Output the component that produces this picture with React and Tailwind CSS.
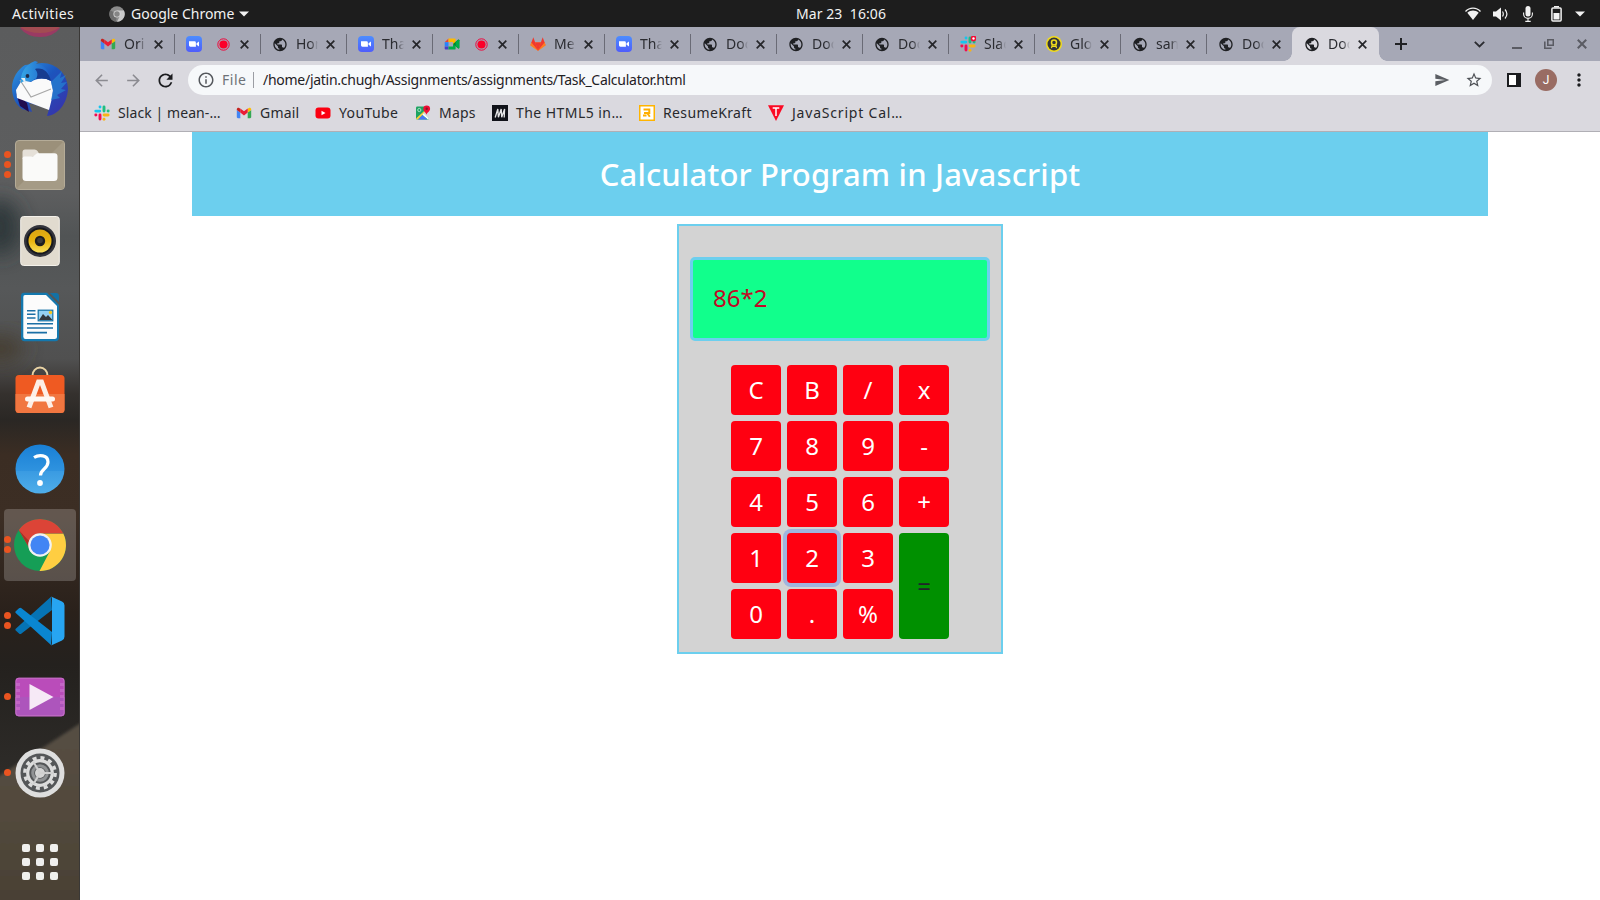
import React from "react";
import {
  MdArrowBack,
  MdArrowForward,
  MdRefresh,
  MdStarBorder,
  MdSend,
  MdInfoOutline,
  MdMoreVert,
  MdPublic,
} from "react-icons/md";

/* ---------- favicons ---------- */

function Gmail() {
  return (
    <svg width="16" height="16" viewBox="0 0 16 16">
      <path d="M.8 5v7.1c0 .7.5 1.1 1.1 1.1h2.4V7.4z" fill="#4285f4" />
      <path d="M15.2 5v7.1c0 .7-.5 1.1-1.1 1.1h-2.4V7.4z" fill="#34a853" />
      <path d="M11.7 3.7v3.9l3.5-2.6V4.3c0-1.6-1.5-2-2.4-1.4z" fill="#fbbc04" />
      <path d="M4.3 7.6V3.5L8 6.3l3.7-2.8v4.1L8 10.4z" fill="#ea1c36" />
      <path d="M.8 4.3V5l3.5 2.6V3.7l-1.1-.8C2.300 2.300.8 2.700.8 4.300z" fill="#c5221f" />
    </svg>
  );
}

function Zoom() {
  return (
    <svg width="16" height="16" viewBox="0 0 16 16">
      <defs>
        <linearGradient id="zm" x1="0" y1="0" x2="0" y2="1">
          <stop offset="0" stopColor="#4c8dff" />
          <stop offset="1" stopColor="#4f5dfb" />
        </linearGradient>
      </defs>
      <rect width="16" height="16" rx="4" fill="url(#zm)" />
      <path d="M3 5.300h5.500a1.400 1.400 0 0 1 1.400 1.400v4H4.400A1.400 1.400 0 0 1 3 9.300z" fill="#fff" />
      <path d="M10.500 7.200L13 5.400v5.200l-2.500-1.800z" fill="#fff" />
    </svg>
  );
}

function Meet() {
  return (
    <svg width="16" height="16" viewBox="0 0 16 16">
      <path d="M4.500 2.500L.7 6.200h3.800z" fill="#ea4335" />
      <path d="M.7 6.200h3.800v4.200H.7z" fill="#2684fc" />
      <path d="M.7 10.400v2.400c0 .5.300.8.800.8h3v-3.200z" fill="#4640c8" />
      <path d="M4.500 2.500h6.200c.6 0 .9.300.9.900v3L9 8.200V6H4.500z" fill="#ffba00" />
      <path d="M4.500 13.600h6.200c.6 0 .9-.3.900-.9V9.400L9 8v2.500H4.500z" fill="#00ac47" />
      <path d="M9 8l5-4.200c.5-.4 1.300-.2 1.300.5v7.500c0 .7-.8.900-1.300.5z" fill="#00832d" />
      <path d="M11.600 6l2.600-2.200c.5-.3 1.100 0 1.100.5v7.500c0 .6-.6.800-1.100.4L11.600 10z" fill="#00ac47" />
    </svg>
  );
}

function Recording() {
  return (
    <svg width="13" height="13" viewBox="0 0 13 13">
      <circle cx="6.500" cy="6.500" r="5.700" fill="none" stroke="#f0043a" strokeWidth="1" />
      <circle cx="6.500" cy="6.500" r="4.100" fill="#fb0029" />
    </svg>
  );
}

function Globe() {
  return <MdPublic size={17} color="#1f2023" />;
}

function Gitlab() {
  return (
    <svg width="16" height="16" viewBox="0 0 16 16">
      <path d="M8 14.800L.4 9.200 1.300 6.300h13.400l.9 2.900z" fill="#fc6d26" />
      <path d="M.4 9.200L8 14.800 4 10z" fill="#fca326" />
      <path d="M15.600 9.200L8 14.800 12 10z" fill="#fca326" />
      <path d="M3.300 1.300L5.200 6.400 8 14.800 1.300 6.800z" fill="#f0392f" />
      <path d="M12.700 1.300L10.800 6.400 8 14.800l6.700-8z" fill="#f0392f" />
      <path d="M5.200 6.400h5.600L8 14.800z" fill="#f0392f" />
      <path d="M1.300 6.300L8 14.800.4 9.200zM14.700 6.300L8 14.800l7.600-5.600z" fill="#fc7a26" />
    </svg>
  );
}

function Slack({ badge }) {
  return (
    <svg width="16" height="16" viewBox="0 0 16 16">
      <g strokeLinecap="round" strokeWidth="2.900">
        <path d="M1.800 6.100h4" stroke="#15c5f0" />
        <path d="M6 1.900v.2" stroke="#15c5f0" />
        <path d="M10 2v4" stroke="#1fbf80" />
        <path d="M14.200 6h-.1" stroke="#1fbf80" />
        <path d="M10.100 10h4" stroke="#f8b316" />
        <path d="M10 14.100v.1" stroke="#f8b316" />
        <path d="M6 10v4" stroke="#f50a50" />
        <path d="M1.800 10h.1" stroke="#f50a50" />
      </g>
      {badge && (
        <g>
          <circle cx="13.500" cy="2.500" r="2.900" fill="#f30a35" />
          <circle cx="13.500" cy="2.500" r="1.200" fill="#fff" />
        </g>
      )}
    </svg>
  );
}

function Award() {
  return (
    <svg width="16" height="16" viewBox="0 0 16 16">
      <circle cx="8" cy="8" r="8" fill="#f2dc1b" />
      <circle cx="8" cy="8" r="6.500" fill="#33343a" />
      <circle cx="8" cy="6.500" r="2.500" fill="none" stroke="#f2dc1b" strokeWidth="1.500" />
      <path d="M6.300 8.700l-.8 3.500M9.700 8.700l.8 3.500M6 10.500h4" stroke="#f2dc1b" strokeWidth="1.200" />
    </svg>
  );
}

function YouTube() {
  return (
    <svg width="16" height="16" viewBox="0 0 16 16">
      <rect x=".5" y="2.500" width="15" height="11" rx="3" fill="#fb0011" />
      <path d="M6.500 5.700v4.600L10.500 8z" fill="#fff" />
    </svg>
  );
}

function Maps() {
  return (
    <svg width="16" height="16" viewBox="0 0 16 16">
      <rect x="1" y="1.500" width="13" height="13" rx="1.200" fill="#1ea362" />
      <path d="M1 13.500L13.500 2l.5 1.500L3 14.500H2z" fill="#fdd23b" />
      <path d="M8 8.500l6-5v10z" fill="#d5d9dc" />
      <path d="M3 14.500l4.500-4.500 5 4.500z" fill="#4a78f5" />
      <path d="M7.300 9.800l1.400-1.300 5.300 5-1 1z" fill="#fff" />
      <circle cx="4.300" cy="5" r="1.600" fill="none" stroke="#c9ecd8" strokeWidth=".8" />
      <path d="M11.500 9.800c-.4-2.200-3.200-3.200-3.200-6a3.400 3.400 0 0 1 6.800 0c0 2.800-3.200 3.800-3.600 6z" fill="#f00e35" />
      <circle cx="11.700" cy="3.800" r="1.200" fill="#8d1528" />
    </svg>
  );
}

function Html5Site() {
  return (
    <svg width="16" height="16" viewBox="0 0 16 16">
      <rect width="16" height="16" fill="#101219" />
      <path d="M3.200 12.500L5.800 4l.6 8.300L9.200 4l.5 8.300L12.600 4l-.4 8.500" fill="none" stroke="#e4e4e6" strokeWidth="1.300" />
    </svg>
  );
}

function ResumeKraft() {
  return (
    <svg width="16" height="16" viewBox="0 0 16 16">
      <rect x=".75" y=".75" width="14.500" height="14.500" fill="#fff" stroke="#ffb400" strokeWidth="1.500" />
      <path d="M4.500 4.600h5.800v3.300H5M8.200 8l2.600 3.700" fill="none" stroke="#ffae00" strokeWidth="2" />
      <path d="M4 10.500h3.500" stroke="#ffae00" strokeWidth="2" />
    </svg>
  );
}

function TutorialSite() {
  return (
    <svg width="16" height="16" viewBox="0 0 16 16">
      <path d="M0 .2h16L8 16z" fill="#fb0a24" />
      <path d="M4.700 3h6.600M8 3v8" stroke="#fff" strokeWidth="1.500" />
    </svg>
  );
}

/* ---------- top bar ---------- */

function TopBar() {
  return (
    <header className="grid h-[27px] shrink-0 grid-cols-3 items-center bg-[#1d1d1d] text-[14px] leading-[27px] text-[#f2f2f2]">
      <div className="flex items-center pl-[12px]">
        <span className="w-[97px] tracking-[0.380px]">Activities</span>
        <svg width="16" height="16" viewBox="0 0 16 16" className="mr-[6px]">
          <circle cx="8" cy="8" r="7.700" fill="#8b8b8b" />
          <path d="M8 8L1.300 4.200A7.700 7.700 0 0 0 7 15.600z" fill="#6d6d6d" />
          <path d="M8 4.500h6.900A7.700 7.700 0 0 1 8 15.700l3-6z" fill="#c9c9c9" />
          <circle cx="8" cy="8" r="3.600" fill="#d5d5d5" />
          <circle cx="8" cy="8" r="2.700" fill="#858585" />
        </svg>
        <span>Google Chrome</span>
        <svg width="10" height="6" viewBox="0 0 10 6" className="ml-[5px]">
          <path d="M0 .5h10L5 5.500z" fill="#f2f2f2" />
        </svg>
      </div>
      <div className="pl-[82px] text-center tracking-[0.080px] whitespace-pre">Mar 23  16:06</div>
      <div className="flex items-center justify-end pr-[15px]">
        <svg width="16" height="14" viewBox="0 0 16 14" className="mr-[12px]">
          <path d="M.5 4.500C4.500 0 11.500 0 15.500 4.500" fill="none" stroke="#f2f2f2" strokeWidth="1.300" />
          <path d="M2.300 5.800C5.500 2.600 10.500 2.600 13.700 5.800L8 13z" fill="#f2f2f2" />
        </svg>
        <svg width="15" height="14" viewBox="0 0 15 14" className="mr-[15px]">
          <path d="M0 4.500h3L8 .5v13l-5-4H0z" fill="#f2f2f2" />
          <path d="M9.500 4.500c1 1.500 1 3.500 0 5M12 2.500c2.300 2.700 2.300 6.300 0 9" fill="none" stroke="#f2f2f2" strokeWidth="1.200" />
        </svg>
        <svg width="10" height="16" viewBox="0 0 10 16" className="mr-[18px]">
          <rect x="2.500" y="0" width="5" height="10.500" rx="2.500" fill="#f2f2f2" />
          <path d="M.6 6.500V8a4.400 4.400 0 0 0 8.800 0V6.500M5 12.300v3M2.300 15.400h5.400" fill="none" stroke="#f2f2f2" strokeWidth="1.100" />
        </svg>
        <svg width="11" height="16" viewBox="0 0 11 16" className="mr-[13px]">
          <path d="M3 .7h5" stroke="#f2f2f2" strokeWidth="1.500" />
          <rect x=".9" y="1.900" width="9.200" height="13.200" rx="1" fill="none" stroke="#f2f2f2" strokeWidth="1.500" />
          <rect x="2.500" y="7" width="6" height="6.500" fill="#f2f2f2" />
        </svg>
        <svg width="10" height="6" viewBox="0 0 10 6">
          <path d="M0 .5h10L5 5.500z" fill="#f2f2f2" />
        </svg>
      </div>
    </header>
  );
}

/* ---------- dock ---------- */

function Thunderbird() {
  return (
    <svg width="58" height="58" viewBox="0 0 58 58">
      <defs>
        <linearGradient id="tb1" x1="0" y1="0" x2="1" y2="1">
          <stop offset="0" stopColor="#2f9be4" />
          <stop offset=".45" stopColor="#1c55bd" />
          <stop offset="1" stopColor="#3b2ea8" />
        </linearGradient>
        <linearGradient id="tb2" x1="0" y1="0" x2="1" y2="0">
          <stop offset="0" stopColor="#35a6e6" />
          <stop offset="1" stopColor="#1e5fc9" />
        </linearGradient>
      </defs>
      <path d="M14 5C7 9 1 18 1 28c0 9 4 17 10 21l10 3-3-9 20 6-2 7c11-1 20-12 21-27C57 15 46 3 31 3z" fill="url(#tb1)" />
      <path d="M5 33l4 13 9 6-2-9z" fill="#210d50" />
      <path d="M11 20l9 2c5-4 14-5 20-1l2 9-1 8-3 12-8-3-24-9-1-8z" fill="#fafafa" />
      <path d="M9 20l11 17 20-8" fill="none" stroke="#a8a8a8" strokeWidth="1.200" />
      <path d="M10 23c-1-8 3-18 14-22l3 1-2 2c8 0 13 6 14 16-6-3-14-3-18 1-4 1-8-1-11 2z" fill="url(#tb2)" />
      <path d="M24 9c8-2 14 3 16 12-5-3-10-3-15-2 2-3 2-7-1-10z" fill="#173c8f" />
      <path d="M40 22l11-11-2 7 6-3-5 8 6-1-6 7 5 1-9 5 3 3-9 2 2-9z" fill="#2580d1" opacity=".75" />
      <circle cx="16.500" cy="16" r="1.900" fill="#1c2c4b" />
      <path d="M10 18l5 6-1-6z" fill="#e7edf2" />
    </svg>
  );
}

function Files() {
  return (
    <svg width="50" height="50" viewBox="0 0 50 50">
      <rect x=".5" y=".5" width="49" height="49" rx="3.500" fill="#9b907a" stroke="#b5ac98" />
      <path d="M1 49L49 1v45q0 3-3 3z" fill="#a59b86" />
      <path d="M7.500 19v-7q0-2.500 2.500-2.500h9.500q2 0 3 1.500l2.500 4z" fill="#e5e0d8" />
      <path d="M7.500 18.500q0-2 2-2H18l4-3.200h17.500q3 0 3 3v21.200q0 3.500-3.500 3.500H11q-3.500 0-3.500-3.500z" fill="#fafaf9" />
    </svg>
  );
}

function Rhythmbox() {
  return (
    <svg width="40" height="50" viewBox="0 0 40 50">
      <defs>
        <linearGradient id="rb" x1="0" y1="0" x2="0" y2="1">
          <stop offset="0" stopColor="#d9a514" />
          <stop offset=".5" stopColor="#e9b40f" />
          <stop offset="1" stopColor="#f8df59" />
        </linearGradient>
      </defs>
      <rect x=".7" y=".5" width="38.600" height="49" rx="3" fill="#e1dbcf" stroke="#f4f1ea" />
      <circle cx="20" cy="25" r="16" fill="#33343c" />
      <circle cx="20" cy="25" r="13.500" fill="#17181d" />
      <circle cx="20" cy="25" r="11.500" fill="url(#rb)" />
      <circle cx="20" cy="25" r="5.200" fill="#1d1e20" />
      <circle cx="20" cy="24.500" r="2.800" fill="#3a3b3d" />
    </svg>
  );
}

function Writer() {
  return (
    <svg width="40" height="50" viewBox="0 0 40 50">
      <path d="M4 .8h23L39 13v32.500q0 3.700-3.700 3.700H4.700Q1 49.200 1 45.500V4Q1 .8 4 .8z" fill="#1478ae" />
      <path d="M5 3h21l11 11v30.500q0 2.500-2.500 2.500h-29Q3.300 47 3.300 44.500V5Q3.300 3 5 3z" fill="#fcfcfc" />
      <path d="M30 1h6q3 0 3 3v6z" fill="#1371a5" />
      <g stroke="#1b6fa5" strokeWidth="1.600">
        <path d="M7 18.700h8.500M7 22.300h8.500M7 26h8.500M7 31.800h26M7 36h26M7 40.600h20" />
      </g>
      <rect x="18.200" y="18.200" width="14.600" height="10.600" fill="#95d0f2" stroke="#1371a5" strokeWidth="1.200" />
      <path d="M19 28l4-6 3 3 2-2 4.500 5z" fill="#34383d" />
      <circle cx="30.500" cy="20.500" r="1.700" fill="#f5c51d" />
    </svg>
  );
}

function Software() {
  return (
    <svg width="50" height="48" viewBox="0 0 50 48" className="mb-[7px]">
      <path d="M17.500 12V9.500a7.500 8 0 0 1 15 0V12" fill="none" stroke="#e9d3a4" strokeWidth="2" />
      <rect x=".5" y="9" width="49" height="38" rx="3.500" fill="#ef5a22" />
      <path d="M.5 28h49v15.500q0 3.500-3.500 3.500H4Q.5 47 .5 43.500z" fill="#f17640" />
      <path d="M14 41.500L23.500 16h3L36 41.500" fill="none" stroke="#fdeee6" strokeWidth="5" />
      <rect x="10" y="30.500" width="30" height="5" rx="2.500" fill="#fff7f2" />
    </svg>
  );
}

function Help() {
  return (
    <svg width="50" height="50" viewBox="0 0 50 50">
      <defs>
        <linearGradient id="hp" x1="0" y1="0" x2="0" y2="1">
          <stop offset="0" stopColor="#197fd5" />
          <stop offset=".54" stopColor="#2f93df" />
          <stop offset=".55" stopColor="#3a9be2" />
          <stop offset="1" stopColor="#4faeea" />
        </linearGradient>
      </defs>
      <circle cx="25" cy="25" r="24.500" fill="url(#hp)" />
      <path d="M19 13.500c5-3.200 14-2.800 14 4.500 0 7-7.500 7-7.500 13.500" fill="none" stroke="#fff" strokeWidth="3.200" />
      <circle cx="25" cy="39" r="2.900" fill="#fff" />
    </svg>
  );
}

function ChromeLogo() {
  return (
    <svg width="52" height="52" viewBox="0 0 52 52">
      <circle cx="26" cy="26" r="26" fill="#159e56" />
      <path d="M26 14.500h23.300A26 26 0 0 1 25.500 52L36 32z" fill="#ffce42" />
      <path d="M4.800 11A26 26 0 0 1 49.300 14.500H26A11.500 11.500 0 0 0 15.500 29.500z" fill="#dc4437" />
      <path d="M4.800 11L16 30a11 11 0 0 1-1-8z" fill="#a83228" />
      <circle cx="26" cy="26" r="11.800" fill="#f2f2f2" />
      <circle cx="26" cy="26" r="9.600" fill="#4285f4" />
    </svg>
  );
}

function VSCode() {
  return (
    <svg width="50" height="50" viewBox="0 0 50 50">
      <path d="M36 .8L1 32.500q-1.300 1.200 0 2.300l3 2.800q1.200 1 2.500 0L37 14z" fill="#0673b4" />
      <path d="M36 49L1 17.300q-1.300-1.200 0-2.300l3-2.800q1.200-1 2.500 0L37 36z" fill="#0a86d1" />
      <path d="M36 .5l11 5q2.500 1.200 2.500 4v31q0 2.800-2.500 4l-11 5q1-.8 1-2.500V3q0-1.700-1-2.500z" fill="#27a5f2" />
    </svg>
  );
}

function Videos() {
  return (
    <svg width="50" height="40" viewBox="0 0 50 40">
      <rect x=".5" y=".8" width="49" height="38.400" rx="3" fill="#ba4cba" />
      <path d="M.5 20h49v16q0 3.200-3 3.200h-43q-3 0-3-3.200z" fill="#ad55bc" />
      <path d="M3 6v30M47 6v30" stroke="#c465c6" strokeWidth="4" strokeDasharray="3 3" />
      <rect x=".9" y="1.200" width="48.200" height="37.600" rx="3" fill="none" stroke="#c878c8" strokeWidth=".8" />
      <path d="M14.500 7v26L38.500 20z" fill="#f6e9f6" />
    </svg>
  );
}

function Settings() {
  return (
    <svg width="50" height="50" viewBox="0 0 50 50">
      <circle cx="25" cy="25" r="24.500" fill="#dedede" />
      <circle cx="25" cy="25" r="19.500" fill="#545658" />
      <circle cx="25" cy="25" r="15.200" fill="none" stroke="#dcdcdc" strokeWidth="3.400" strokeDasharray="3.980 3.980" />
      <circle cx="25" cy="25" r="12.300" fill="none" stroke="#dcdcdc" strokeWidth="3.200" />
      <circle cx="25" cy="25" r="7.300" fill="none" stroke="#909294" strokeWidth="3" />
      <circle cx="25" cy="25" r="5" fill="#d5d5d5" />
      <path d="M25 25h13M25 25l-6.500 11M25 25l-6.500-11" stroke="#d0d0d0" strokeWidth="2" />
    </svg>
  );
}

const DOCK = [
  { Icon: Thunderbird, dots: 0 },
  { Icon: Files, dots: 3 },
  { Icon: Rhythmbox, dots: 0 },
  { Icon: Writer, dots: 0 },
  { Icon: Software, dots: 0 },
  { Icon: Help, dots: 0 },
  { Icon: ChromeLogo, dots: 2, active: true },
  { Icon: VSCode, dots: 2 },
  { Icon: Videos, dots: 1 },
  { Icon: Settings, dots: 1 },
];

function DockWallpaper() {
  return (
    <svg className="absolute inset-0" width="80" height="873" viewBox="0 0 80 873">
      <defs>
        <linearGradient id="wall" x1="0" y1="0" x2="0" y2="1">
          <stop offset="0" stopColor="#5b5c5d" />
          <stop offset=".19" stopColor="#5d5e5f" />
          <stop offset=".24" stopColor="#515455" />
          <stop offset=".3" stopColor="#565859" />
          <stop offset=".38" stopColor="#505050" />
          <stop offset=".42" stopColor="#35312e" />
          <stop offset=".45" stopColor="#2a2724" />
          <stop offset=".49" stopColor="#3b2d23" />
          <stop offset=".56" stopColor="#3c2e24" />
          <stop offset=".67" stopColor="#2a211b" />
          <stop offset=".73" stopColor="#24211e" />
          <stop offset=".85" stopColor="#2d2b28" />
        </linearGradient>
        <linearGradient id="wood" x1="0" y1="0" x2="0" y2="1">
          <stop offset="0" stopColor="#554e44" />
          <stop offset=".5" stopColor="#52493c" />
          <stop offset="1" stopColor="#483f33" />
        </linearGradient>
        <filter id="soft" x="-50%" y="-50%" width="200%" height="200%">
          <feGaussianBlur stdDeviation="10" />
        </filter>
        <filter id="edge" x="-10%" y="-10%" width="120%" height="120%">
          <feGaussianBlur stdDeviation="1.500" />
        </filter>
      </defs>
      <rect width="80" height="873" fill="url(#wall)" />
      <ellipse cx="0" cy="200" rx="20" ry="28" fill="#2d373a" filter="url(#soft)" />
      <ellipse cx="0" cy="322" rx="24" ry="14" fill="#453d30" filter="url(#soft)" />
      <path d="M90 690L-10 755v130H90z" fill="url(#wood)" filter="url(#edge)" />
      <path d="M79.500 0v873" stroke="#3a3836" strokeWidth="1" />
      <path d="M20 1h40q-7 9-20 9T20 1z" fill="#9a3a63" />
      <path d="M20 0h40q-8 6-20 6T20 0z" fill="#a24c52" />
    </svg>
  );
}

function Dock() {
  return (
    <aside className="relative w-[80px] shrink-0 overflow-hidden">
      <DockWallpaper />
      <div className="relative flex flex-col items-center pt-[24px]">
        {DOCK.map(({ Icon, dots, active }, i) => (
          <div key={i} className="relative flex h-[76px] w-full items-center justify-center">
            <div
              className={
                active
                  ? "flex h-[72px] w-[72px] items-center justify-center rounded-[4px] bg-white/20"
                  : "flex h-[72px] w-[72px] items-center justify-center"
              }
            >
              <Icon />
            </div>
            <div className="absolute top-[-1px] left-[4px] flex h-full flex-col items-center justify-center gap-[3px]">
              {Array.from({ length: dots }, (_, k) => (
                <span key={k} className="h-[7px] w-[7px] rounded-full bg-[#ea5420]" />
              ))}
            </div>
          </div>
        ))}
        <div className="mt-[33px] grid grid-cols-3 gap-[6px]">
          {Array.from({ length: 9 }, (_, k) => (
            <span key={k} className="h-[8px] w-[8px] rounded-[2px] bg-[#efefed]" />
          ))}
        </div>
      </div>
    </aside>
  );
}

/* ---------- browser ---------- */

const TABS = [
  { icon: <Gmail />, label: "Ori" },
  { icon: <Zoom />, rec: true },
  { icon: <Globe />, label: "Hor" },
  { icon: <Zoom />, label: "Tha" },
  { icon: <Meet />, rec: true },
  { icon: <Gitlab />, label: "Me" },
  { icon: <Zoom />, label: "Tha" },
  { icon: <Globe />, label: "Doc" },
  { icon: <Globe />, label: "Doc" },
  { icon: <Globe />, label: "Doc" },
  { icon: <Slack badge />, label: "Slac" },
  { icon: <Award />, label: "Glo" },
  { icon: <Globe />, label: "san" },
  { icon: <Globe />, label: "Doc" },
  { icon: <Globe />, label: "Doc", active: true },
];

function Cross({ size = 9, color = "#26272b", width = 1.7 }) {
  return (
    <svg width={size} height={size} viewBox="0 0 9 9" className="shrink-0">
      <path d="M.7.7l7.600 7.600M8.300.7L.7 8.300" stroke={color} strokeWidth={width} />
    </svg>
  );
}

function Tab({ icon, label, rec, active, divider }) {
  return (
    <div
      className={
        active
          ? "relative flex h-[34px] w-[87px] shrink-0 items-center rounded-t-[8px] bg-[#dad9df] pl-[12px]"
          : "relative flex h-[34px] w-[86px] shrink-0 items-center pl-[12px]"
      }
    >
      <span className="flex w-[16px] shrink-0 items-center justify-center">{icon}</span>
      {rec ? (
        <span className="ml-[15px] flex w-[23px]">
          <Recording />
        </span>
      ) : (
        <span className="ml-[8px] w-[22px] text-[14px] leading-[20px] whitespace-nowrap text-[#2b2c31] [mask-image:linear-gradient(to_right,black_65%,transparent_100%)]">
          {label}
        </span>
      )}
      <span className={rec ? "ml-[0px] flex" : "ml-[8px] flex"}>
        <Cross />
      </span>
      {divider && <span className="absolute top-[7px] right-[-1px] h-[20px] w-px bg-[#6a6b76]" />}
      {active && (
        <>
          <span className="absolute bottom-0 left-[-8px] h-[8px] w-[8px] bg-[radial-gradient(circle_at_0_0,transparent_7.500px,#dad9df_8px)]" />
          <span className="absolute right-[-8px] bottom-0 h-[8px] w-[8px] bg-[radial-gradient(circle_at_100%_0,transparent_7.500px,#dad9df_8px)]" />
        </>
      )}
    </div>
  );
}

function TabStrip() {
  return (
    <div className="flex h-[34px] items-center bg-[#a6a8b6] pl-[8px]">
      {TABS.map((t, i) => (
        <Tab key={i} {...t} divider={i < 13} />
      ))}
      <svg width="12" height="12" viewBox="0 0 12 12" className="ml-[16px]">
        <path d="M6 0v12M0 6h12" stroke="#202124" strokeWidth="2" />
      </svg>
      <div className="flex flex-1 items-center justify-end pr-[13px]">
        <svg width="11" height="7" viewBox="0 0 11 7" className="mr-[27px]">
          <path d="M.8.8l4.700 4.700L10.200.8" fill="none" stroke="#2b2c31" strokeWidth="1.800" />
        </svg>
        <span className="mt-[8px] mr-[22px] h-[2px] w-[10px] bg-[#5a5b63]" />
        <svg width="10" height="10" viewBox="0 0 10 10" className="mr-[23px]">
          <path d="M3.800.8h5.500v5.500H3.800zM.8 2.500v6.800h6.800" fill="none" stroke="#5a5b63" strokeWidth="1.600" />
        </svg>
        <Cross size={10} color="#5a5b63" width={1.8} />
      </div>
    </div>
  );
}

function Toolbar() {
  return (
    <div className="flex h-[38px] items-center bg-[#dad9df] pl-[12px]">
      <MdArrowBack size={19} color="#8b8b91" className="mr-[13px]" />
      <MdArrowForward size={19} color="#8b8b91" className="mr-[12px]" />
      <MdRefresh size={21} color="#1b1c1f" className="mr-[12px]" />
      <div className="flex h-[30px] w-[1304px] shrink-0 items-center rounded-full bg-[#f6f8fa] pr-[9px] pl-[9px]">
        <MdInfoOutline size={18} color="#55585d" />
        <span className="ml-[7px] w-[31px] pb-[2px] text-[14px] tracking-[0.500px] text-[#6e7278]">File</span>
        <span className="h-[16px] w-px bg-[#9b9da3]" />
        <span className="ml-[9px] pb-[2px] text-[14px] tracking-[-0.270px] text-[#1f2024]">
          /home/jatin.chugh/Assignments/assignments/Task_Calculator.html
        </span>
        <span className="flex-1" />
        <MdSend size={16} color="#5b5e63" className="mr-[15px]" />
        <MdStarBorder size={18} color="#4d5055" />
      </div>
      <svg width="14" height="14" viewBox="0 0 14 14" className="ml-[15px] shrink-0">
        <rect x="1" y="1" width="12" height="12" fill="#fff" stroke="#1b1c1f" strokeWidth="2" />
        <path d="M9 1h4v12H9z" fill="#1b1c1f" />
      </svg>
      <span className="ml-[14px] flex h-[22px] w-[22px] shrink-0 items-center justify-center rounded-full bg-[#996c63] font-[Roboto] text-[12px] text-white">
        J
      </span>
      <MdMoreVert size={20} color="#1b1c1f" className="ml-[12px] shrink-0" />
    </div>
  );
}

function Bookmark({ icon, className, children }) {
  return (
    <div className={"flex shrink-0 items-center gap-[8px] whitespace-nowrap " + className}>
      {icon}
      <span className="pb-[2px]">{children}</span>
    </div>
  );
}

function Bookmarks() {
  return (
    <div className="flex h-[33px] items-center border-b border-[#b0afb5] bg-[#dad9df] pb-[4px] pl-[14px] text-[14px] text-[#28292d]">
      <Bookmark icon={<Slack />} className="w-[142px] tracking-[0.080px]">Slack | mean-…</Bookmark>
      <Bookmark icon={<Gmail />} className="w-[79px] tracking-[0.200px]">Gmail</Bookmark>
      <Bookmark icon={<YouTube />} className="w-[100px] tracking-[0.400px]">YouTube</Bookmark>
      <Bookmark icon={<Maps />} className="w-[77px] tracking-[0.200px]">Maps</Bookmark>
      <Bookmark icon={<Html5Site />} className="w-[147px] tracking-[0.450px]">The HTML5 in…</Bookmark>
      <Bookmark icon={<ResumeKraft />} className="w-[129px] tracking-[0.370px]">ResumeKraft</Bookmark>
      <Bookmark icon={<TutorialSite />} className="tracking-[0.800px]">JavaScript Cal…</Bookmark>
    </div>
  );
}

/* ---------- calculator ---------- */

const KEYS = ["C", "B", "/", "x", "7", "8", "9", "-", "4", "5", "6", "+", "1", "2", "3", "=", "0", ".", "%"];

function Key({ label }) {
  if (label === "=") {
    return (
      <button className="row-span-2 rounded-[4px] bg-[#009000] text-[#212529]">=</button>
    );
  }
  return (
    <button
      className={
        label === "2"
          ? "rounded-[4px] bg-[#ff0011] text-white shadow-[0_0_0_4px_#9fb5df]"
          : "rounded-[4px] bg-[#ff0011] text-white"
      }
    >
      {label}
    </button>
  );
}

function Page() {
  return (
    <main className="flex flex-1 flex-col items-center bg-white">
      <h1 className="flex h-[84px] w-[1296px] items-center justify-center bg-[#6ccfee] text-[31px] font-medium tracking-[0.170px] text-white">
        Calculator Program in Javascript
      </h1>
      <section className="mt-[8px] flex h-[430px] w-[326px] flex-col items-center border-2 border-[#6ccfee] bg-[#d3d3d3] pt-[31px] font-['Noto_Sans',sans-serif] text-[24px]">
        <div className="flex h-[84px] w-[300px] items-center rounded-[5px] border-3 border-[#6ccfee] bg-[#11ff8c] pb-[2px] pl-[20px] text-[#c00a26]">
          86*2
        </div>
        <div className="mt-[24px] grid grid-cols-[repeat(4,50px)] grid-rows-[repeat(5,50px)] gap-[6px]">
          {KEYS.map((k) => (
            <Key key={k} label={k} />
          ))}
        </div>
      </section>
    </main>
  );
}

export default function App() {
  return (
    <div className="flex h-[900px] w-[1600px] flex-col overflow-hidden bg-white font-['Noto_Sans',sans-serif]">
      <TopBar />
      <div className="flex min-h-0 flex-1">
        <Dock />
        <div className="flex flex-1 flex-col">
          <TabStrip />
          <Toolbar />
          <Bookmarks />
          <Page />
        </div>
      </div>
    </div>
  );
}
